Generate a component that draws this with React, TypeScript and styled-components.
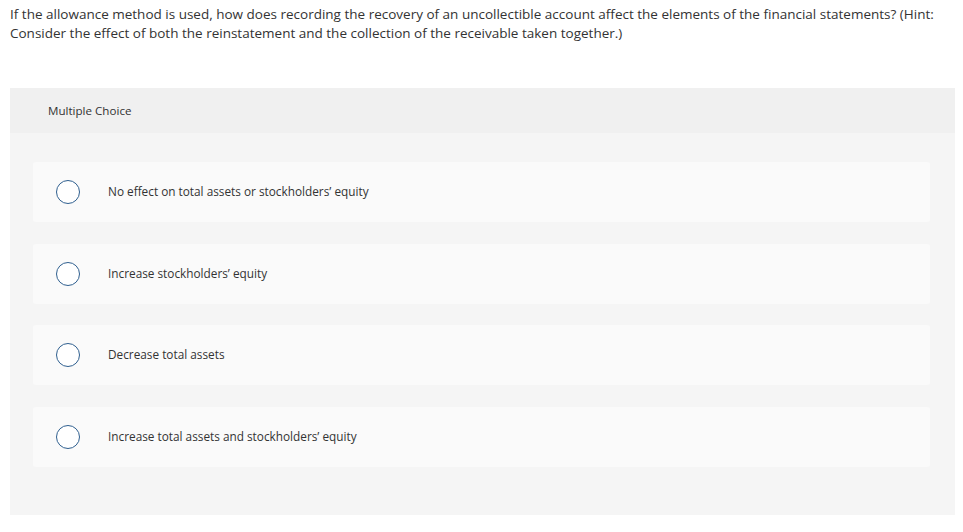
import React from "react";
import styled, { createGlobalStyle } from "styled-components";

const GlobalStyle = createGlobalStyle`
  body {
    margin: 0;
    background: #ffffff;
    font-family: "Open Sans", Lato, Arial, sans-serif;
    color: #333333;
  }
`;

const Page = styled.div`
  padding: 5px 8px 0 10px;
`;

const Question = styled.p`
  margin: 0;
  font-size: 13.5px;
  line-height: 19px;
  color: #333333;
  white-space: nowrap;
`;

const Panel = styled.section`
  margin-top: 45px;
  background: #f5f5f5;
`;

const PanelHeader = styled.div`
  height: 45px;
  display: flex;
  align-items: center;
  padding-left: 38px;
  padding-bottom: 1px;
  box-sizing: border-box;
  background: #f0f0f0;
  font-size: 11.6px;
  color: #333333;
`;

const Options = styled.div`
  display: flex;
  flex-direction: column;
  gap: 21.7px;
  padding: 29px 25px 48px 23px;
`;

const Option = styled.label`
  height: 60px;
  display: flex;
  align-items: center;
  padding-left: 23px;
  padding-bottom: 2px;
  box-sizing: border-box;
  background: #fafafa;
  border-radius: 3px;
  cursor: pointer;
`;

const Radio = styled.span`
  width: 22px;
  height: 22px;
  margin-top: 2px;
  border: 1.5px solid #2f5f8f;
  border-radius: 50%;
  background: #ffffff;
  flex-shrink: 0;
`;

const OptionText = styled.span`
  margin-left: 28px;
  font-size: 11.8px;
  color: #333333;
`;

const choices = [
  "No effect on total assets or stockholders\u2019 equity",
  "Increase stockholders\u2019 equity",
  "Decrease total assets",
  "Increase total assets and stockholders\u2019 equity",
];

export default function App() {
  return (
    <>
      <GlobalStyle />
      <Page>
        <Question>
          If the allowance method is used, how does recording the recovery of an uncollectible account affect the
          elements of the financial statements? (Hint:
          <br />
          Consider the effect of both the reinstatement and the collection of the receivable taken together.)
        </Question>
        <Panel>
          <PanelHeader>Multiple Choice</PanelHeader>
          <Options>
            {choices.map((c) => (
              <Option key={c}>
                <Radio />
                <OptionText>{c}</OptionText>
              </Option>
            ))}
          </Options>
        </Panel>
      </Page>
    </>
  );
}
